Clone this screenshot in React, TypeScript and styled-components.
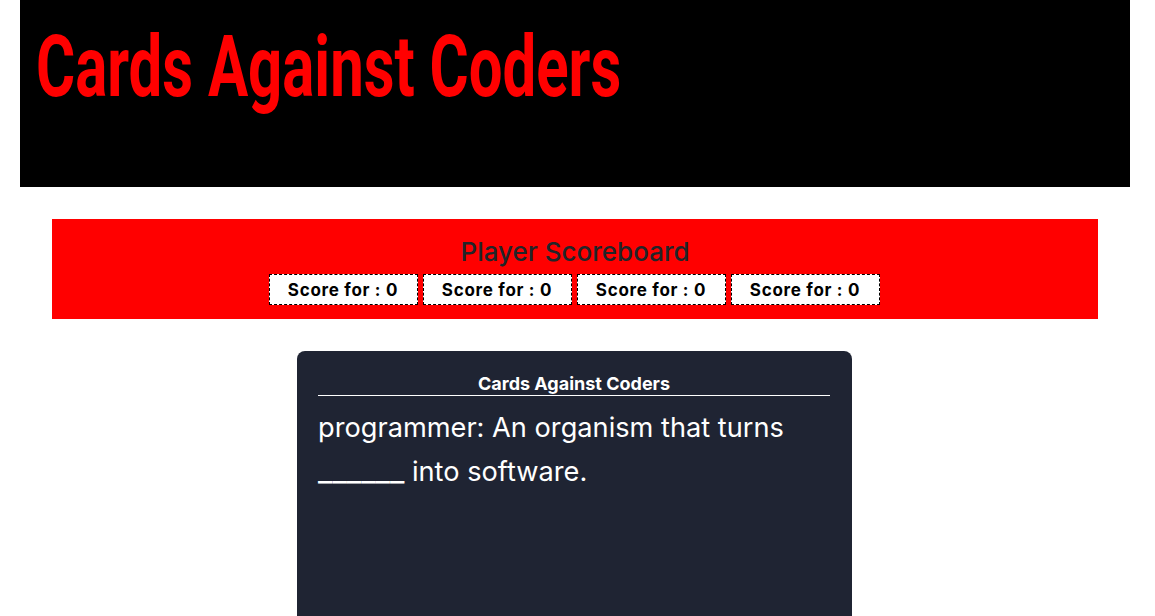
import styled, { createGlobalStyle } from 'styled-components'

const GlobalStyle = createGlobalStyle`
  html, body {
    margin: 0;
    padding: 0;
    background: #fff;
    overflow: hidden;
  }
  body {
    font-family: Inter, 'Liberation Sans', sans-serif;
  }
`

const Page = styled.div`
  width: 1150px;
  display: flex;
  flex-direction: column;
  align-items: center;
`

const Header = styled.header`
  width: 1110px;
  height: 187px;
  background: #000;
  padding: 16px 16px 0;
  box-sizing: border-box;
`

// the original uses a condensed display face; squeeze Roboto to match
const Title = styled.h1`
  margin: 0;
  color: #ff0000;
  font-family: Roboto, 'Liberation Sans', sans-serif;
  font-weight: 700;
  font-size: 86px;
  line-height: 102px;
  white-space: nowrap;
  transform: scaleX(0.696);
  transform-origin: left center;
`

const Scoreboard = styled.section`
  width: 1046px;
  margin-top: 32px;
  background: #ff0000;
  padding: 16px 0 14px;
  box-sizing: border-box;
  display: flex;
  flex-direction: column;
  align-items: center;
`

const BoardTitle = styled.h3`
  margin: 0 0 5px;
  font-family: Inter, 'Liberation Sans', sans-serif;
  font-weight: 500;
  font-size: 26px;
  line-height: 34px;
  color: #212529;
`

const ScoreRow = styled.div`
  display: flex;
  gap: 5px;
  margin-left: -2px;
`

const ScoreBox = styled.div`
  width: 149px;
  box-sizing: border-box;
  text-align: center;
  border: 1px dashed #000;
  background: #fff;
  padding: 4px 0 2px;
  font-family: Inter, 'Liberation Sans', sans-serif;
  font-weight: 700;
  font-size: 17px;
  letter-spacing: 0.7px;
  line-height: 23px;
  color: #000;
`

const Card = styled.div`
  width: 555px;
  height: 300px;
  margin-top: 32px;
  margin-right: 1px;
  background: #1f2433;
  border-radius: 8px;
  padding: 21px 22px 0 21px;
  box-sizing: border-box;
  color: #fff;
`

const CardTitle = styled.div`
  text-align: center;
  font-weight: 700;
  font-size: 18px;
  line-height: 23px;
  border-bottom: 1px solid #fff;
`

const CardText = styled.p`
  margin: 10px 0 0;
  font-size: 27.2px;
  line-height: 44px;
  font-weight: 400;
`

const Blank = styled.span`
  font-size: 1.16em;
  line-height: 0;
`

const players = [0, 0, 0, 0]

export default function App() {
  return (
    <>
      <GlobalStyle />
      <Page>
        <Header>
          <Title>Cards Against Coders</Title>
        </Header>
        <Scoreboard>
          <BoardTitle>Player Scoreboard</BoardTitle>
          <ScoreRow>
            {players.map((score, i) => (
              <ScoreBox key={i}>Score for : {score}</ScoreBox>
            ))}
          </ScoreRow>
        </Scoreboard>
        <Card>
          <CardTitle>Cards Against Coders</CardTitle>
          <CardText>
            programmer: An organism that turns <Blank>______</Blank> into software.
          </CardText>
        </Card>
      </Page>
    </>
  )
}
